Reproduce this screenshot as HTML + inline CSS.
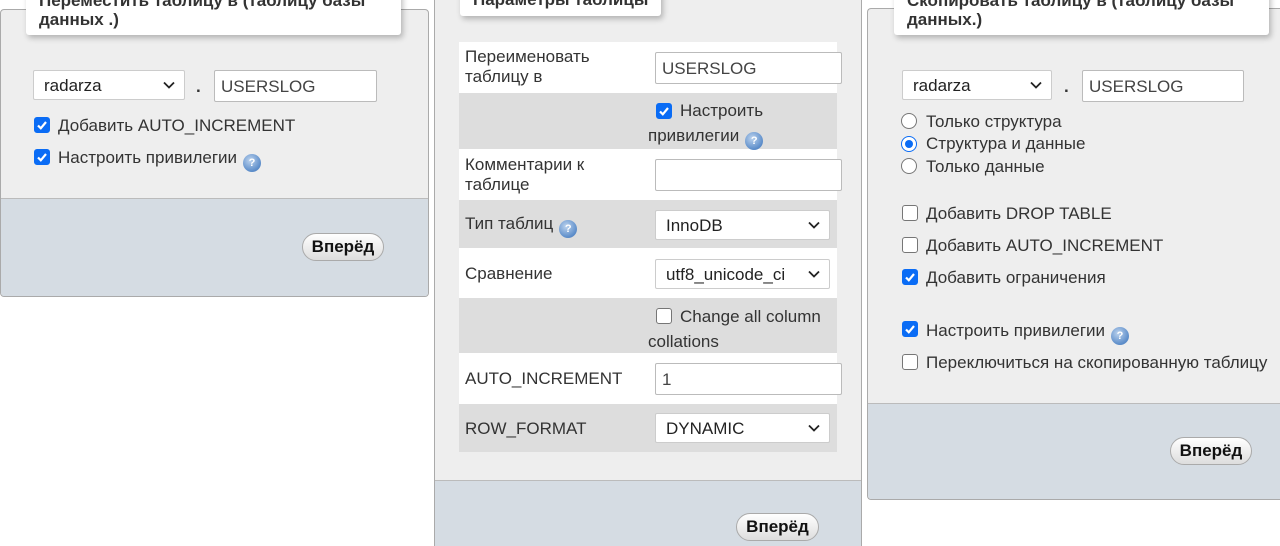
<!DOCTYPE html>
<html><head><meta charset="utf-8"><style>
*{box-sizing:border-box;margin:0;padding:0}
html,body{width:1280px;height:546px;overflow:hidden}
body{background:#fff;font-family:"Liberation Sans",Arial,sans-serif;font-size:17px;color:#333;position:relative}
.panel{position:absolute;background:#eee;border:1px solid #aaa;border-radius:4px;overflow:hidden}
.foot{position:absolute;left:0;right:0;bottom:0;background:#d5dce3;border-top:1px solid #bbb}
.leg{position:absolute;background:#fff;box-shadow:2px 3px 6px rgba(0,0,0,.25);border-radius:0 0 3px 3px;font-weight:bold;font-size:17px;line-height:19px;color:#333;padding-left:13px;white-space:nowrap;overflow:hidden}
.sel{position:absolute;background:#fff;border:1px solid #ccc;border-radius:2px;height:30px;line-height:29px;padding-left:10px;color:#222;font-size:17px}
.sel svg{position:absolute;right:9px;top:10px}
.inp{position:absolute;background:#fff;border:1px solid #bbb;border-radius:2px;height:32px;line-height:31px;padding-left:6px;color:#444;font-size:17px}
.cb{position:absolute;width:16px;height:16px;border:1.5px solid #767676;border-radius:3px;background:#fff}
.cb.on{background:#0a6cf5;border-color:#0a6cf5}
.cb.on svg{position:absolute;left:1px;top:1px}
.rad{position:absolute;width:16px;height:16px;border:1.5px solid #767676;border-radius:50%;background:#fff}
.rad.on{border:1.5px solid #0a6cf5}
.rad.on:after{content:"";position:absolute;left:2.5px;top:2.5px;width:8px;height:8px;border-radius:50%;background:#0a6cf5}
.t{position:absolute;white-space:nowrap;line-height:20px;font-size:17px}
.help{display:inline-block;width:18px;height:18px;border-radius:50%;background:radial-gradient(circle at 40% 35%,#bcd3ee,#5b8cc9 70%,#4a78b2);vertical-align:-3px;color:#fff;font-size:11px;font-weight:bold;text-align:center;line-height:18px;margin-left:6px}
.btn{position:absolute;height:28px;border:1px solid #aaa;border-radius:14px;background:linear-gradient(#fff,#ddd);font-weight:bold;font-size:17px;line-height:26px;text-align:center;color:#111}
.row{position:absolute;left:459px;width:378px}
.g{background:#ddd}.w{background:#fff}
</style></head><body>

<!-- LEFT -->
<div class="panel" style="left:0;top:9px;width:429px;height:288px">
  <div class="foot" style="height:98px"></div>
</div>
<div class="leg" style="left:26px;top:-10px;width:375px;height:45px;padding-top:1px">Переместить таблицу в (таблицу базы<br>данных .)</div>
<div class="sel" style="left:33px;top:70px;width:152px">radarza<svg width="12" height="8" viewBox="0 0 12 8"><path d="M1 1.5l5 5 5-5" fill="none" stroke="#222" stroke-width="1.8"/></svg></div>
<div class="t" style="left:196px;top:77px;font-weight:bold">.</div>
<div class="inp" style="left:214px;top:70px;width:163px">USERSLOG</div>
<div class="cb on" style="left:34px;top:117px"><svg width="12" height="12" viewBox="0 0 12 12"><path d="M2 6.5l2.8 2.8L10 3" fill="none" stroke="#fff" stroke-width="2.2"/></svg></div>
<div class="t" style="left:58px;top:116px">Добавить AUTO_INCREMENT</div>
<div class="cb on" style="left:34px;top:149px"><svg width="12" height="12" viewBox="0 0 12 12"><path d="M2 6.5l2.8 2.8L10 3" fill="none" stroke="#fff" stroke-width="2.2"/></svg></div>
<div class="t" style="left:58px;top:148px">Настроить привилегии<span class="help">?</span></div>
<div class="btn" style="left:302px;top:233px;width:82px">Вперёд</div>

<!-- MIDDLE -->
<div class="panel" style="left:434px;top:-4px;width:428px;height:550px;border-bottom:none;border-radius:4px 4px 0 0">
  <div class="foot" style="top:483px"></div>
</div>
<div class="leg" style="left:460px;top:-10px;width:201px;height:26px">Параметры таблицы</div>
<div class="row w" style="top:42px;height:51px"></div>
<div class="row g" style="top:93px;height:56px"></div>
<div class="row w" style="top:149px;height:51px"></div>
<div class="row g" style="top:200px;height:48px"></div>
<div class="row w" style="top:248px;height:50px"></div>
<div class="row g" style="top:298px;height:55px"></div>
<div class="row w" style="top:353px;height:51px"></div>
<div class="row g" style="top:404px;height:48px"></div>

<div class="t" style="left:465px;top:47px">Переименовать<br>таблицу в</div>
<div class="inp" style="left:655px;top:52px;width:187px">USERSLOG</div>
<div class="cb on" style="left:656px;top:103px"><svg width="12" height="12" viewBox="0 0 12 12"><path d="M2 6.5l2.8 2.8L10 3" fill="none" stroke="#fff" stroke-width="2.2"/></svg></div>
<div class="t" style="left:680px;top:101px">Настроить</div>
<div class="t" style="left:648px;top:126px">привилегии<span class="help">?</span></div>
<div class="t" style="left:465px;top:155px">Комментарии к<br>таблице</div>
<div class="inp" style="left:655px;top:159px;width:187px"></div>
<div class="t" style="left:465px;top:214px">Тип таблиц<span class="help">?</span></div>
<div class="sel" style="left:655px;top:210px;width:175px">InnoDB<svg width="12" height="8" viewBox="0 0 12 8"><path d="M1 1.5l5 5 5-5" fill="none" stroke="#222" stroke-width="1.8"/></svg></div>
<div class="t" style="left:465px;top:264px">Сравнение</div>
<div class="sel" style="left:655px;top:259px;width:175px">utf8_unicode_ci<svg width="12" height="8" viewBox="0 0 12 8"><path d="M1 1.5l5 5 5-5" fill="none" stroke="#222" stroke-width="1.8"/></svg></div>
<div class="cb" style="left:656px;top:308px"></div>
<div class="t" style="left:680px;top:307px">Change all column</div>
<div class="t" style="left:648px;top:332px">collations</div>
<div class="t" style="left:465px;top:369px">AUTO_INCREMENT</div>
<div class="inp" style="left:655px;top:363px;width:187px">1</div>
<div class="t" style="left:465px;top:419px">ROW_FORMAT</div>
<div class="sel" style="left:655px;top:413px;width:175px">DYNAMIC<svg width="12" height="8" viewBox="0 0 12 8"><path d="M1 1.5l5 5 5-5" fill="none" stroke="#222" stroke-width="1.8"/></svg></div>
<div class="btn" style="left:736px;top:513px;width:83px">Вперёд</div>

<!-- RIGHT -->
<div class="panel" style="left:867px;top:8px;width:413px;height:492px;border-right:none;border-radius:4px 0 0 4px">
  <div class="foot" style="height:96px"></div>
</div>
<div class="leg" style="left:894px;top:-10px;width:375px;height:45px;padding-top:1px">Скопировать таблицу в (таблицу базы<br>данных.)</div>
<div class="sel" style="left:902px;top:70px;width:150px">radarza<svg width="12" height="8" viewBox="0 0 12 8"><path d="M1 1.5l5 5 5-5" fill="none" stroke="#222" stroke-width="1.8"/></svg></div>
<div class="t" style="left:1064px;top:77px;font-weight:bold">.</div>
<div class="inp" style="left:1082px;top:70px;width:162px">USERSLOG</div>
<div class="rad" style="left:901px;top:113px"></div>
<div class="t" style="left:926px;top:112px">Только структура</div>
<div class="rad on" style="left:901px;top:136px"></div>
<div class="t" style="left:926px;top:134px">Структура и данные</div>
<div class="rad" style="left:901px;top:158px"></div>
<div class="t" style="left:926px;top:157px">Только данные</div>
<div class="cb" style="left:902px;top:205px"></div>
<div class="t" style="left:926px;top:204px">Добавить DROP TABLE</div>
<div class="cb" style="left:902px;top:237px"></div>
<div class="t" style="left:926px;top:236px">Добавить AUTO_INCREMENT</div>
<div class="cb on" style="left:902px;top:269px"><svg width="12" height="12" viewBox="0 0 12 12"><path d="M2 6.5l2.8 2.8L10 3" fill="none" stroke="#fff" stroke-width="2.2"/></svg></div>
<div class="t" style="left:926px;top:268px">Добавить ограничения</div>
<div class="cb on" style="left:902px;top:321px"><svg width="12" height="12" viewBox="0 0 12 12"><path d="M2 6.5l2.8 2.8L10 3" fill="none" stroke="#fff" stroke-width="2.2"/></svg></div>
<div class="t" style="left:926px;top:321px">Настроить привилегии<span class="help">?</span></div>
<div class="cb" style="left:902px;top:354px"></div>
<div class="t" style="left:926px;top:353px">Переключиться на скопированную таблицу</div>
<div class="btn" style="left:1170px;top:437px;width:82px">Вперёд</div>

</body></html>
